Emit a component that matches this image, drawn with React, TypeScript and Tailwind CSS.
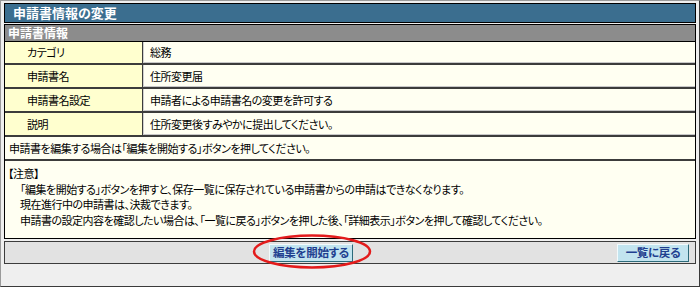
import React from 'react'

const rows = [
  { label: 'カテゴリ', value: '総務' },
  { label: '申請書名', value: '住所変更届' },
  { label: '申請書名設定', value: '申請者による申請書名の変更を許可する' },
  { label: '説明', value: '住所変更後すみやかに提出してください。' },
]

const notes = [
  '「編集を開始する」ボタンを押すと、保存一覧に保存されている申請書からの申請はできなくなります。',
  '現在進行中の申請書は、決裁できます。',
  '申請書の設定内容を確認したい場合は、「一覧に戻る」ボタンを押した後、「詳細表示」ボタンを押して確認してください。',
]

const buttonClass =
  'h-[18px] shrink-0 p-0 flex items-center justify-center whitespace-nowrap bg-[#c2e4ef] border border-solid border-t-[#f2fafc] border-l-[#f2fafc] border-r-[#2c6a7a] border-b-[#2c6a7a] text-[11.5px] font-bold leading-none tracking-[-0.3px] text-[#1f3f8f]'

export default function App() {
  return (
    <div className="relative w-[700px] h-[287px] bg-[#efefef] border border-t-[#9a9a9a] border-l-[#9a9a9a] border-r-[#3a3a3a] border-b-[#3a3a3a] pt-[2px] pl-[3px] pr-[3px] text-black text-[11px] [font-family:'Noto_Sans_CJK_JP','Noto_Sans',sans-serif] [font-feature-settings:'palt']">
      {/* page title */}
      <div className="h-[20px] flex items-center bg-[#3b6e8f] border border-black pl-[8px] text-white text-[13px] font-bold">
        申請書情報の変更
      </div>

      <div className="mt-[1px] border border-black bg-[#fffff2] tracking-[-0.5px]">
        <div className="h-[17px] flex items-center bg-[#8c8c8c] border-b border-black pl-[3px] text-white text-[12px] font-bold tracking-normal">
          申請書情報
        </div>

        {rows.map((row, i) => (
          <div
            key={row.label}
            className={i === 0
              ? 'h-[23px] flex border-b-2 border-b-[#3c3c3c] shadow-[inset_0_-1px_0_#c8c8c8]'
              : 'h-[24px] flex border-b-2 border-b-[#3c3c3c] shadow-[inset_0_-1px_0_#c8c8c8]'}
          >
            <div className="w-[138px] flex items-center bg-[#ffffcf] pl-[22px] border-r border-[#3c3c3c]">
              {row.label}
            </div>
            <div className="flex-1 flex items-center pl-[6px] border-l border-[#d0d0d0]">
              {row.value}
            </div>
          </div>
        ))}

        <div className="h-[24px] flex items-center pl-[4px] border-b-2 border-b-[#3c3c3c]">
          申請書を編集する場合は「編集を開始する」ボタンを押してください。
        </div>

        <div className="h-[77px] pt-[5px] pl-[3px] leading-[15.7px]">
          <div>【注意】</div>
          {notes.map((n) => (
            <div key={n} className="pl-[12px]">
              {n}
            </div>
          ))}
        </div>
      </div>

      {/* button bar */}
      <div className="mt-[2px] h-[23px] flex items-center bg-[#e2e2e2] border border-[#3c3c3c] pr-[6px]">
        <div className="flex-1 flex justify-center">
          <button className={buttonClass + ' w-[84px]'}>編集を開始する</button>
        </div>
        <button className={buttonClass + ' w-[72px]'}>一覧に戻る</button>
      </div>

      {/* red highlight ring */}
      <svg className="absolute left-[250px] top-[232px]" width="122" height="37" viewBox="0 0 122 37">
        <ellipse cx="61" cy="18.5" rx="58" ry="16" fill="none" stroke="#e31b1b" strokeWidth="2.5" />
      </svg>
    </div>
  )
}
